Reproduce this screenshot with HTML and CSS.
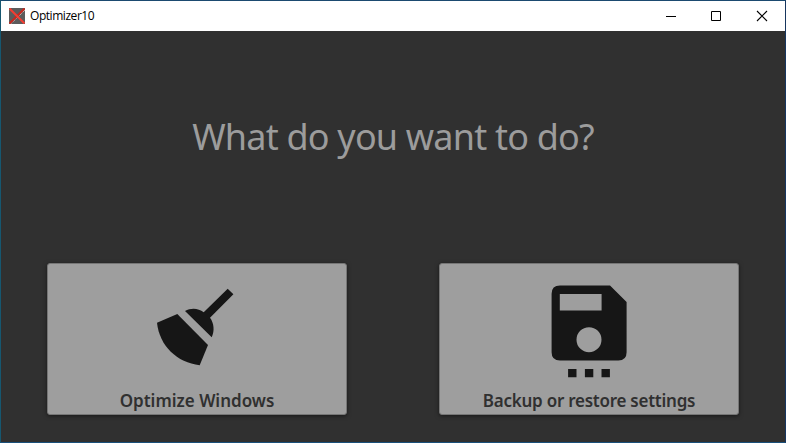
FILE: index.html
```html
<!DOCTYPE html>
<html lang="en">
<head>
<meta charset="utf-8">
<title>Optimizer10</title>
<link rel="stylesheet" href="styles.css">
</head>
<body>
<div class="window">
  <header class="titlebar">
    <svg class="app-icon" width="16" height="16" viewBox="0 0 16 16">
      <rect width="16" height="16" fill="#5c5c5c"/>
      <path d="M1 16.500L16 2" stroke="#fff" stroke-width="1" stroke-dasharray="1 1"/>
      <path d="M0.500 15.500L15.500 0.500" stroke="#c5281f" stroke-width="2"/>
      <path d="M0.500 0.500L15.500 15.500" stroke="#f43d32" stroke-width="2"/>
    </svg>
    <span class="app-name">Optimizer10</span>
    <div class="controls">
      <svg width="45" height="29" viewBox="0 0 45 29"><path d="M17 14.500h10" stroke="#000"/></svg>
      <svg width="45" height="29" viewBox="0 0 45 29"><path d="M17.500 9.500h9v9h-9z" fill="none" stroke="#000"/></svg>
      <svg width="46" height="29" viewBox="0 0 46 29"><path d="M18 9l10 10M28 9L18 19" stroke="#000" stroke-width="1.100"/></svg>
    </div>
  </header>
  <main>
    <h1>What do you want to do?</h1>
    <div class="cards">
      <button class="card">
        <svg width="100" height="100" viewBox="147 277 100 100" fill="#161616">
          <path d="M227.700 288.700L233.400 294.200L210 317.700C214 323 214.800 331 211.700 337.200L185 311C191 307.500 198.500 308 203.700 312.300Z"/>
          <path d="M177.300 314L208 345L199.700 365.200C177 362.500 159.500 346 157 322.700Z"/>
        </svg>
        <span class="optimize">Optimize Windows</span>
      </button>
      <button class="card">
        <svg width="100" height="100" viewBox="539 277 100 100" fill="#161616">
          <path fill-rule="evenodd" d="M610 285.500H560Q551.600 285.500 551.600 293.800V352.300Q551.600 360.600 560 360.600H618.300Q626.600 360.600 626.600 352.300V302.100ZM559.800 293.900H601.600V310.600H559.800ZM589 327.200A12.500 12.500 0 1 1 589 352.200A12.500 12.500 0 1 1 589 327.200Z"/>
          <path d="M568.100 369h8.400v8.300h-8.400zM584.900 369h8.400v8.300h-8.400zM601.500 369h8.400v8.300h-8.400z"/>
        </svg>
        <span class="backup">Backup or restore settings</span>
      </button>
    </div>
  </main>
</div>
</body>
</html>
```
FILE: styles.css
```css
* { box-sizing: border-box; }
body { margin: 0; }
.window {
  width: 786px;
  height: 443px;
  display: flex;
  flex-direction: column;
  background: #303030;
  border: 1px solid;
  border-color: #1b4a70 #17365f #1a507b #165770;
  font-family: "Noto Sans", "Open Sans", sans-serif;
}
.titlebar {
  height: 30px;
  display: flex;
  align-items: center;
  padding-left: 8px;
  background: #fff;
}
.app-icon { margin-right: 5px; }
.app-name {
  font: 12px/16px "Open Sans", "Noto Sans", sans-serif;
  letter-spacing: -0.45px;
  color: #000;
}
.controls { display: flex; margin-left: auto; }
main { flex: 1; }
h1 {
  margin: 79px 0 0;
  height: 54px;
  line-height: 54px;
  text-align: center;
  font-size: 36px;
  font-weight: 400;
  letter-spacing: -0.8px;
  color: #9c9c9c;
}
.cards {
  display: flex;
  justify-content: space-between;
  margin: 99px 46px 0;
}
.card {
  width: 300px;
  height: 152px;
  padding: 0;
  display: flex;
  flex-direction: column;
  align-items: center;
  justify-content: flex-end;
  border: 1px solid #767676;
  border-radius: 3px;
  background: #9e9e9e;
  box-shadow: 0 1px 4px rgba(0, 0, 0, 0.5);
  font: 600 17px/24px "Noto Sans", "Open Sans", sans-serif;
  color: #303030;
}
.card svg { flex: none; overflow: visible; }
.card span {
  margin: 12px 0 1px;
  white-space: nowrap;
}
.backup { letter-spacing: -0.25px; }
```
